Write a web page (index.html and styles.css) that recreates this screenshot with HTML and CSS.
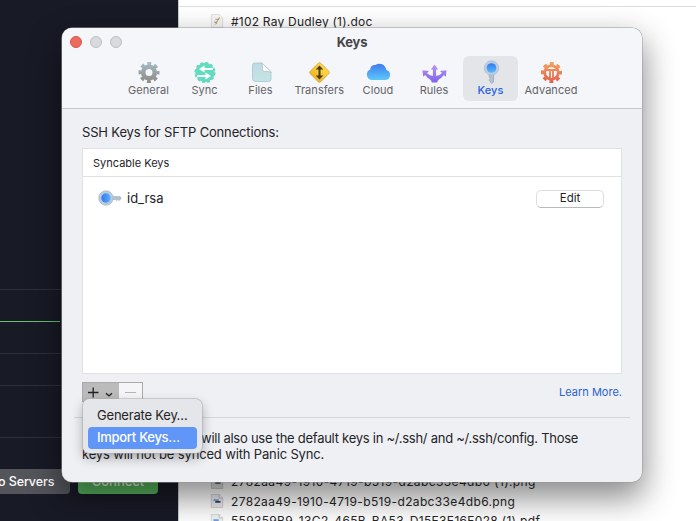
FILE: index.html
```html
<!DOCTYPE html>
<html lang="en">
<head>
<meta charset="utf-8">
<title>Keys</title>
<link rel="stylesheet" href="styles.css">
</head>
<body>
<svg width="0" height="0" class="defs">
  <defs>
    <linearGradient id="gGear" gradientUnits="userSpaceOnUse" x1="0" y1="-10" x2="0" y2="10"><stop offset="0" stop-color="#a3bac6"/><stop offset="1" stop-color="#8d8c86"/></linearGradient>
    <linearGradient id="gFile" x1="0" y1="0" x2="0" y2="1"><stop offset="0" stop-color="#bddbe2"/><stop offset="1" stop-color="#c6e3e6"/></linearGradient>
    <linearGradient id="gSign" x1="0" y1="0" x2="0" y2="1"><stop offset="0" stop-color="#ffd84a"/><stop offset="1" stop-color="#f0b622"/></linearGradient>
    <linearGradient id="gCloud" x1="0" y1="0" x2="0" y2="1"><stop offset="0" stop-color="#3f7bf0"/><stop offset="1" stop-color="#5cc8fa"/></linearGradient>
    <linearGradient id="gRules" x1="0" y1="0" x2="0" y2="1"><stop offset="0" stop-color="#b995ee"/><stop offset="1" stop-color="#7f63ee"/></linearGradient>
    <linearGradient id="gBlue" x1="0" y1="0" x2="0" y2="1"><stop offset="0" stop-color="#2f78f3"/><stop offset="1" stop-color="#5db9fb"/></linearGradient>
    <linearGradient id="gBlueH" x1="0" y1="0" x2="1" y2="0"><stop offset="0" stop-color="#2f78f3"/><stop offset="1" stop-color="#5db2fb"/></linearGradient>
    <linearGradient id="gAdv" gradientUnits="userSpaceOnUse" x1="0" y1="-10" x2="0" y2="10"><stop offset="0" stop-color="#efa260"/><stop offset="1" stop-color="#e5604c"/></linearGradient>
  </defs>
</svg>
<div class="desktop">
  <aside class="side">
    <div class="rule r1"></div>
    <div class="rule r2"></div>
    <div class="rule r3"></div>
    <div class="rule r4"></div>
    <div class="rule r5"></div>
    <div class="actions"><span class="btn grey">o Servers</span><span class="btn green">Connect</span></div>
  </aside>
  <main class="files">
    <div class="row first"><svg class="doc" viewBox="0 0 14 16"><path d="M.5.5h9l4 4v11H.5z" fill="#f7f7f5" stroke="#ddd"/><path d="M4 9l2 1 4-6" fill="none" stroke="#c69a58" stroke-width="1.3"/><path d="M5 6h4M5 12l2-2" stroke="#888" stroke-width=".8"/></svg><span>#102 Ray Dudley (1).doc</span></div>
    <div class="row second"><svg class="doc" viewBox="0 0 14 16"><path d="M.5.5h9l4 4v11H.5z" fill="#e1e1e3" stroke="#c3c3c6"/><path d="M9.500.5v4h4" fill="#fff" stroke="#bbb"/><path d="M3 7h6" stroke="#6fa0e2" stroke-width="2"/><path d="M5 9h6" stroke="#345" stroke-width="2"/></svg><span>2782aa49-1910-4719-b519-d2abc33e4db6 (1).png</span></div>
    <div class="row"><svg class="doc" viewBox="0 0 14 16"><path d="M.5.5h9l4 4v11H.5z" fill="#ededef" stroke="#cfcfd2"/><path d="M9.500.5v4h4" fill="#fff" stroke="#bbb"/><path d="M3 7h6" stroke="#6fa0e2" stroke-width="2"/><path d="M5 9h6" stroke="#345" stroke-width="2"/></svg><span>2782aa49-1910-4719-b519-d2abc33e4db6.png</span></div>
    <div class="row"><svg class="doc" viewBox="0 0 14 16"><path d="M.5.5h9l4 4v11H.5z" fill="#f3f3f4" stroke="#d5d5d8"/><path d="M9.500.5v4h4" fill="#fff" stroke="#bbb"/><path d="M3 7h6" stroke="#6fa0e2" stroke-width="2"/></svg><span class="pdf">559359B9-13C2-465B-BA53-D15E3E16F028 (1).pdf</span></div>
  </main>

  <section class="window">
    <header class="bar">
      <div class="lights"><i class="red"></i><i></i><i></i></div>
      <h1>Keys</h1>
      <nav>
        <div class="tab"><svg viewBox="-12 -11.500 24 22"><g fill="none" stroke="url(#gGear)"><circle r="5.800" stroke-width="4.600"/><circle r="9" stroke-width="3" stroke-dasharray="3.900 3.169" stroke-dashoffset="1.950"/></g></svg><span>General</span></div>
        <div class="tab"><svg viewBox="-12 -11.500 24 22"><circle r="9.700" fill="#62dcc0"/><circle r="9.900" fill="none" stroke="#5bd2b7" stroke-width="1.200" stroke-dasharray="3 2.183"/><path d="M8-3.500h-9M1 3.500h-9" stroke="#fff" stroke-width="2.200"/><path d="M-6-3.500l5.500-3.500v7zM6 3.500l-5.500-3.500v7z" fill="#fff"/></svg><span>Sync</span></div>
        <div class="tab"><svg viewBox="0 1 24 22"><path d="M5.500 3h7.500l9 9v7q0 2.500-2.500 2.500H7q-3.500 0-3.500-3V5.500Q3.500 3 5.500 3z" fill="url(#gFile)" stroke="#a5c6d0" stroke-width=".8"/><path d="M12 3q2 1 1.500 6.500 0 2 2 2Q21 11 22 13q-.5-2-1.500-3L14 4q-1-1-2-1z" fill="#fff" stroke="#b1bfc3" stroke-width=".8"/></svg><span>Files</span></div>
        <div class="tab wide"><svg viewBox="-12.500 -11.500 24 22"><rect x="-7.400" y="-7.400" width="14.800" height="14.800" rx="1.800" transform="rotate(45)" fill="url(#gSign)" stroke="#d9a02a" stroke-width=".8"/><path d="M0-4v8" stroke="#493c17" stroke-width="2"/><path d="M0-7l3.800 4h-7.600zM0 7l3.800-4h-7.600z" fill="#493c17"/></svg><span>Transfers</span></div>
        <div class="tab"><svg viewBox="1 2.500 24 22"><path d="M6.500 21.500a5.500 5.500 0 0 1-1.200-10.500 4.300 4.300 0 0 1 5-4.500A7 7 0 0 1 21.300 11.500 5.100 5.100 0 0 1 19.800 21.500z" fill="url(#gCloud)"/></svg><span>Cloud</span></div>
        <div class="tab"><svg viewBox="-12.500 -12.500 24 22"><path d="M0-9l3.600 5H1.600V2.500Q5.500 2 7.500-.5L5.500-2.500l6.500-.8-.7 6.600-2-1.800Q7 4.500 5 5.500q-2 1-2.300 3.500h-5.400Q-3 6.500-5 5.500-7 4.500-9.300 1.500l-2 1.800-.7-6.600 6.500.8-2 2Q-5.500 2-1.600 2.500V-4h-2z" fill="url(#gRules)"/></svg><span>Rules</span></div>
        <div class="tab active"><svg viewBox="-.5 1.500 24 22"><path d="M10.300 13h3.800v9.500l-1.800 1.500-1.600-1.500v-.5l-1.300-1.500 1.300-1.300v-.5l-1.200-1.400z" fill="#b4c1ce" stroke="#98a9b9" stroke-width=".7"/><circle cx="12" cy="8.500" r="7.200" fill="#bccedf" stroke="#a9bdcf" stroke-width=".8"/><circle cx="12" cy="8.500" r="4.800" fill="url(#gBlue)"/></svg><span>Keys</span></div>
        <div class="tab adv"><svg viewBox="-12.500 -11.500 24 22"><g fill="none" stroke="url(#gAdv)"><circle r="6.800" stroke-width="2.800"/><circle r="9" stroke-width="3" stroke-dasharray="3.900 3.169" stroke-dashoffset="1.950"/><path d="M-1.500-3v9.500M1.500-3v9.500M-6-2.500H6" stroke-width="1.800"/></g></svg><span>Advanced</span></div>
      </nav>
    </header>
    <div class="content">
      <h2><span>SSH Keys for SFTP Connections:</span></h2>
      <div class="list">
        <div class="head"><span>Syncable Keys</span></div>
        <div class="key"><svg viewBox="0 0 24 16"><path d="M13 6.500h9l1.300 1.500-1 1.500-1 1-1.300-1-1.500 1-1.300-1H13z" fill="#b3c2d1" stroke="#9eafc0" stroke-width=".6"/><circle cx="8" cy="8" r="7.200" fill="#bccbdb" stroke="#a4b6c8" stroke-width=".8"/><circle cx="8" cy="8" r="4.700" fill="url(#gBlueH)"/></svg><span class="name">id_rsa</span><span class="edit">Edit</span></div>
      </div>
      <div class="tools">
        <div class="seg"><div class="add"><svg viewBox="0 0 36 20"><path d="M5 9.500h10.500M10.200 4.500v10" stroke="#222" stroke-width="1.300"/><path d="M23 10.200l3 2.700 3-2.700" fill="none" stroke="#222" stroke-width="1.400"/></svg></div><div class="remove"><i></i></div></div>
        <span class="learn">Learn More.</span>
      </div>
      <div class="divider"></div>
      <p><span class="l1">will also use the default keys in ~/.ssh/ and ~/.ssh/config. Those</span><br><span class="l2">keys will not be synced with Panic Sync.</span></p>
    </div>
    <div class="menu">
      <div><span class="m1">Generate Key…</span></div>
      <div class="on"><span class="m2">Import Keys…</span></div>
    </div>
  </section>
</div>
</body>
</html>
```
FILE: styles.css
```css
* { box-sizing: border-box; }
body { margin: 0; font-family: Inter, "Liberation Sans", sans-serif; color: #242427; overflow: hidden; }
.defs { position: absolute; }
.desktop { width: 696px; height: 521px; display: flex; position: relative; overflow: hidden; background: #fff; }
span { white-space: nowrap; }
.side { width: 178px; background: #181a26; padding-top: 289px; overflow: hidden; flex: none; }
.rule { height: 1px; background: #2d2f3a; }
.r2 { margin-top: 31px; width: 60px; background: #65c272; }
.r3 { margin-top: 31px; }
.r4 { margin-top: 31px; }
.r5 { margin-top: 51px; }
.actions { display: flex; gap: 8px; margin-top: 31px; }
.btn { height: 25px; border-radius: 4px; font-size: 12.5px; line-height: 25px; font-weight: 500; color: #fff; text-align: right; }
.grey { width: 70px; padding-right: 15px; background: #54555b; border-radius: 0 4px 4px 0; letter-spacing: -.1px; text-align: left; text-indent: -2px; }
.green { width: 80px; background: #58b55d; text-align: center; color: #e5f6e4; font-size: 13px; }
.files { flex: 1; border-left: 1px solid #ccc; padding-top: 6px; font-size: 12px; overflow: hidden; }
.row { display: flex; align-items: center; height: 19.500px; padding-left: 31px; gap: 7px; color: #262626; letter-spacing: .35px; }
.first { border-top: 1px solid #dedede; height: 29px; letter-spacing: .22px; }
.second { margin-top: 437px; }
.second span { letter-spacing: .39px; }
.doc { width: 14px; height: 14px; flex: none; }
.pdf { letter-spacing: .32px; }
.window { position: absolute; left: 62px; top: 28px; width: 580px; height: 454px; border-radius: 10px; background: #eff0f4; box-shadow: 0 0 0 .5px #999, 0 14px 32px 2px rgba(0,0,0,.46); }
.bar { height: 81px; background: #f5f6fa; border-bottom: 1px solid #c9cace; border-radius: 10px 10px 0 0; display: grid; grid-template-columns: 62px 1fr 62px; grid-template-rows: 28px 52px; }
.lights { display: flex; gap: 8px; padding: 8px 0 0 8px; }
.lights i { width: 12px; height: 12px; border-radius: 50%; background: #d9dade; border: 1px solid #bdbec2; flex: none; }
.lights .red { background: #ed6a5f; border-color: #d85549; }
h1 { margin: 0; font-size: 13px; line-height: 28px; font-weight: 700; text-align: center; color: #454548; letter-spacing: -.2px; }
nav { grid-column: 1 / 4; display: flex; padding-left: 58.5px; }
.tab { width: 56px; height: 45px; display: flex; flex-direction: column; align-items: center; padding-top: 5px; font-size: 11px; line-height: 14px; color: #636468; letter-spacing: .05px; }
.tab svg { width: 24px; height: 22px; flex: none; overflow: visible; }
.wide { width: 61.5px; }
.active { width: 55px; background: #e4e5e9; border-radius: 6px; color: #245fe8; font-weight: 500; margin-left: 1px; }
.adv { width: 66px; }
.content { padding: 13px 20px 0; }
h2 { margin: 0; font-size: 13px; line-height: 20px; font-weight: 400; letter-spacing: -.16px; }
.list { height: 226px; margin-top: 6px; background: #fff; border: 1px solid #e0e1e4; }
.head { height: 28px; border-bottom: 1px solid #e0e1e4; font-size: 11px; line-height: 28px; padding-left: 10px; }
.key { display: flex; align-items: center; height: 42px; padding: 0 17px 0 15px; font-size: 13px; }
.key svg { width: 24px; height: 16px; margin-right: 5px; }
.name { line-height: 16px; margin-top: -1px; }
.edit { margin: 1px 0 0 auto; width: 68px; height: 18px; font-size: 11.500px; line-height: 15px; text-align: center; border-radius: 5px; border: 1px solid #dedee0; border-bottom-color: #b9b9bb; }
.tools { margin-top: 8px; height: 20px; display: flex; justify-content: space-between; }
.seg { display: flex; width: 61px; border: 1px solid #aaa; }
.add { width: 35px; background: #bbb; }
.add svg { display: block; width: 36px; height: 20px; }
.remove { flex: 1; background: #f5f5f7; display: flex; align-items: center; justify-content: center; border-left: 1px solid #bbb; }
.remove i { width: 11px; height: 1px; background: #b5b5b8; }
.learn { color: #2a62d0; font-size: 11px; line-height: 20px; }
.divider { height: 1px; background: #d5d6da; margin: 15px -8px 0; }
p { margin: 12px 0 0; font-size: 13px; line-height: 16px; }
.l1 { padding-left: 119px; letter-spacing: -.26px; }
.l2 { letter-spacing: -.15px; }
.menu { position: absolute; left: 21px; top: 371px; width: 119px; height: 54px; padding: 5px; border-radius: 6px; background: #e5e6e9; box-shadow: 0 0 0 .5px #aaa, 0 5px 12px rgba(0,0,0,.3); font-size: 13px; letter-spacing: -.2px; }
.menu div { height: 22px; line-height: 23px; padding-left: 9px; }
.menu .on { margin-top: 1px; background: #6096f7; color: #fff; border-radius: 4px; height: 22px; line-height: 21px; font-weight: 500; letter-spacing: -.28px; }
```
